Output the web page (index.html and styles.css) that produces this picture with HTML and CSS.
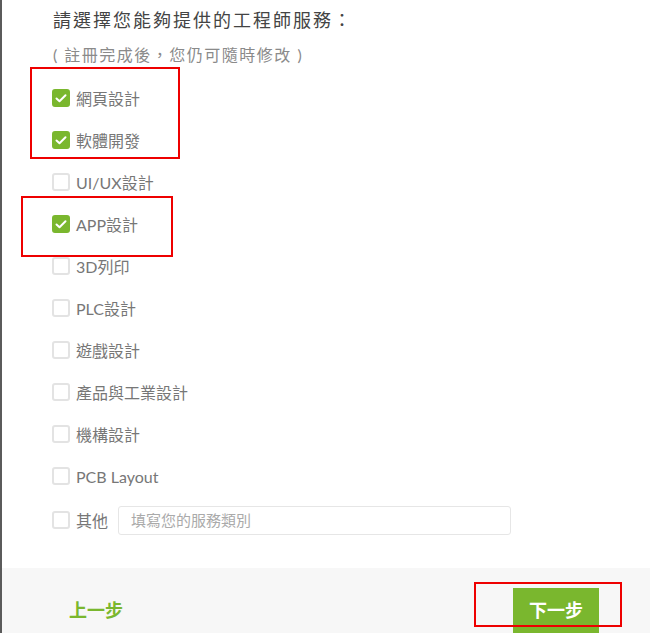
FILE: index.html
```html
<!DOCTYPE html>
<html lang="zh-Hant">
<head>
<meta charset="utf-8">
<title>服務選擇</title>
<link rel="stylesheet" href="styles.css">
</head>
<body>
<div class="modal">
  <div class="content">
    <h2 class="title">請選擇您能夠提供的工程師服務：</h2>
    <p class="subtitle">( 註冊完成後，您仍可隨時修改 )</p>
    <ul class="options">
      <li class="row"><span class="box checked"><svg viewBox="0 0 18 18"><polyline points="4.5,9.5 7.5,12.3 13.5,6.3"/></svg></span><span class="label">網頁設計</span></li>
      <li class="row"><span class="box checked"><svg viewBox="0 0 18 18"><polyline points="4.5,9.5 7.5,12.3 13.5,6.3"/></svg></span><span class="label">軟體開發</span></li>
      <li class="row"><span class="box"></span><span class="label">UI/UX設計</span></li>
      <li class="row"><span class="box checked"><svg viewBox="0 0 18 18"><polyline points="4.5,9.5 7.5,12.3 13.5,6.3"/></svg></span><span class="label">APP設計</span></li>
      <li class="row"><span class="box"></span><span class="label">3D列印</span></li>
      <li class="row"><span class="box"></span><span class="label">PLC設計</span></li>
      <li class="row"><span class="box"></span><span class="label">遊戲設計</span></li>
      <li class="row"><span class="box"></span><span class="label">產品與工業設計</span></li>
      <li class="row"><span class="box"></span><span class="label">機構設計</span></li>
      <li class="row"><span class="box"></span><span class="label">PCB Layout</span></li>
      <li class="row row-other"><span class="box"></span><span class="label">其他</span><input class="other-input" type="text" placeholder="填寫您的服務類別"></li>
    </ul>
  </div>
  <div class="footer">
    <span class="prev">上一步</span>
    <span class="next">下一步</span>
  </div>
  <div class="mark mark-1"></div>
  <div class="mark mark-2"></div>
  <div class="mark mark-3"></div>
</div>
</body>
</html>
```

FILE: styles.css
```css
html, body {
  margin: 0;
  padding: 0;
  background: #ffffff;
}
body {
  font-family: Lato, "Noto Sans CJK TC", sans-serif;
  overflow: hidden;
}
.modal {
  position: relative;
  height: 633px;
  border-left: 2px solid #5b5b5b;
  display: flex;
  flex-direction: column;
  box-sizing: border-box;
}
.content {
  flex: 1;
  padding-left: 51px;
}
.title {
  margin: 0;
  font-size: 18px;
  font-weight: normal;
  letter-spacing: 2px;
  line-height: 41px;
  color: #444444;
}
.subtitle {
  margin: 0;
  font-size: 16px;
  letter-spacing: 1.5px;
  line-height: 28px;
  color: #8a8a8a;
}
.options {
  list-style: none;
  margin: 8px 0 0;
  padding: 0;
}
.row {
  display: flex;
  align-items: center;
  height: 42px;
}
.row-other {
  height: 46px;
}
.box {
  width: 18px;
  height: 18px;
  box-sizing: border-box;
  border: 2px solid #e3e3e3;
  border-radius: 3px;
  margin-left: -1px;
  margin-right: 6px;
  display: flex;
  align-items: center;
  justify-content: center;
  flex: none;
}
.box.checked {
  background: #7ab72e;
  border-color: #7ab72e;
}
.box svg {
  width: 18px;
  height: 18px;
  flex: none;
}
.box polyline {
  fill: none;
  stroke: #ffffff;
  stroke-width: 2;
  stroke-linecap: round;
  stroke-linejoin: round;
}
.label {
  font-size: 16px;
  color: #777777;
}
.other-input {
  margin-left: 10px;
  width: 393px;
  height: 29px;
  box-sizing: border-box;
  border: 1px solid #e6e6e6;
  border-radius: 3px;
  padding: 0 12px;
  font-family: Lato, "Noto Sans CJK TC", sans-serif;
  font-size: 15px;
  color: #555555;
  outline: none;
}
.other-input::placeholder {
  color: #aaaaaa;
}
.footer {
  height: 65px;
  flex: none;
  background: #f7f7f7;
  display: flex;
  justify-content: space-between;
  align-items: flex-start;
  padding: 20px 51px 0 67px;
  box-sizing: border-box;
}
.prev {
  font-size: 18px;
  font-weight: bold;
  color: #7ab72e;
  line-height: 45px;
}
.next {
  background: #7ab72e;
  color: #ffffff;
  font-size: 18px;
  font-weight: bold;
  line-height: 45px;
  height: 45px;
  padding: 0 16px;
}
.mark {
  position: absolute;
  border: 2px solid #ee0000;
  box-sizing: border-box;
  pointer-events: none;
}
.mark-1 {
  left: 28px;
  top: 67px;
  width: 150px;
  height: 92px;
}
.mark-2 {
  left: 19px;
  top: 196px;
  width: 152px;
  height: 61px;
}
.mark-3 {
  left: 472px;
  top: 582px;
  width: 148px;
  height: 45px;
}
```
